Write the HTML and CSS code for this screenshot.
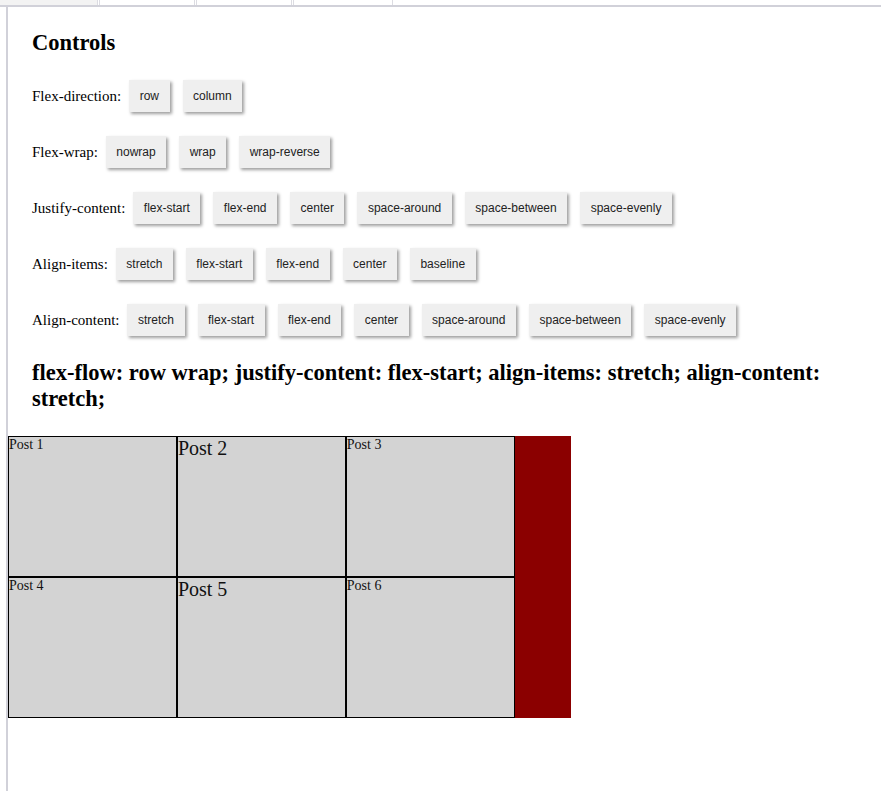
FILE: index.html
```html
<!DOCTYPE html>
<html>
<head>
<meta charset="utf-8">
<link rel="stylesheet" href="styles.css">
</head>
<body>
<div class="tabs">
  <div class="tab tab-active"></div>
  <div class="tab tab-2"></div>
  <div class="tab tab-3"></div>
  <div class="tab tab-4"></div>
</div>
<div class="panel">
  <div class="controls">
    <h3 class="title">Controls</h3>
    <div class="row">
      <span class="label">Flex-direction:</span>
      <button class="btn">row</button>
      <button class="btn">column</button>
    </div>
    <div class="row">
      <span class="label">Flex-wrap:</span>
      <button class="btn">nowrap</button>
      <button class="btn">wrap</button>
      <button class="btn">wrap-reverse</button>
    </div>
    <div class="row">
      <span class="label">Justify-content:</span>
      <button class="btn">flex-start</button>
      <button class="btn">flex-end</button>
      <button class="btn">center</button>
      <button class="btn">space-around</button>
      <button class="btn">space-between</button>
      <button class="btn">space-evenly</button>
    </div>
    <div class="row">
      <span class="label">Align-items:</span>
      <button class="btn">stretch</button>
      <button class="btn">flex-start</button>
      <button class="btn">flex-end</button>
      <button class="btn">center</button>
      <button class="btn">baseline</button>
    </div>
    <div class="row">
      <span class="label">Align-content:</span>
      <button class="btn">stretch</button>
      <button class="btn">flex-start</button>
      <button class="btn">flex-end</button>
      <button class="btn">center</button>
      <button class="btn">space-around</button>
      <button class="btn">space-between</button>
      <button class="btn">space-evenly</button>
    </div>
    <h2 class="summary">flex-flow: row wrap; justify-content: flex-start; align-items: stretch; align-content: stretch;</h2>
  </div>
  <div class="stage">
    <div class="post">Post 1</div>
    <div class="post post-big">Post 2</div>
    <div class="post">Post 3</div>
    <div class="post">Post 4</div>
    <div class="post post-big">Post 5</div>
    <div class="post">Post 6</div>
  </div>
</div>
</body>
</html>
```

FILE: styles.css
```css
html, body {
  margin: 0;
  padding: 0;
  background: #fff;
}

body {
  font-family: "Liberation Serif", "Times New Roman", serif;
  color: #000;
  min-height: 100vh;
  display: flex;
  flex-direction: column;
}

.tabs {
  display: flex;
  height: 5px;
  border-bottom: 2px solid #d1d1d9;
}

.tab {
  height: 5px;
  box-sizing: border-box;
  border: 1px solid #dcdce2;
  border-top: 0;
  border-bottom: 0;
}

.tab-active {
  width: 98px;
  background: #f3f3f3;
  border-left: 0;
}

.tab-2 {
  width: 96px;
  margin-left: 1px;
}

.tab-3 {
  width: 96px;
  margin-left: 1px;
}

.tab-4 {
  width: 100px;
  margin-left: 1px;
}

.panel {
  flex: 1;
  margin-left: 6px;
  border-left: 2px solid #d1d1d9;
}

.controls {
  padding: 23px 24px 0 24px;
  display: flex;
  flex-direction: column;
  gap: 24px;
}

.title {
  margin: 0;
  font-size: 22.5px;
  line-height: 26px;
  font-weight: bold;
}

.row {
  display: flex;
  align-items: center;
  gap: 13px;
}

.label {
  font-size: 15px;
  margin-right: -5px;
}

.btn {
  font-family: "Liberation Sans", Arial, sans-serif;
  font-size: 12px;
  color: #222;
  background: #efefef;
  border: 0;
  height: 32px;
  padding: 0 10.5px;
  line-height: 32px;
  box-shadow: 2px 2px 3px rgba(0, 0, 0, 0.38);
  border-radius: 0;
  margin: 0;
}

.summary {
  margin: 0;
  font-size: 22.5px;
  line-height: 26px;
  font-weight: bold;
}

.stage {
  margin-top: 24px;
  width: 563px;
  height: 282px;
  background: #8b0000;
  display: flex;
  flex-flow: row wrap;
  justify-content: flex-start;
  align-items: stretch;
  align-content: stretch;
}

.post {
  box-sizing: border-box;
  width: 30%;
  border: 1px solid #000;
  background: #d3d3d3;
  font-size: 14px;
  line-height: 16px;
  color: #111;
}

.post-big {
  font-size: 20px;
  line-height: 23px;
}
```
